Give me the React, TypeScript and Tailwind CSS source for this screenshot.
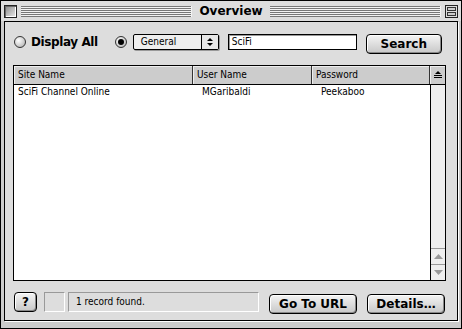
const ui = "font-['DejaVu_Sans_Condensed','DejaVu_Sans',sans-serif]";
const bold = "font-['DejaVu_Sans','Liberation_Sans',sans-serif] font-bold";

function MacButton({ label, w }: { label: string; w: string }) {
  return (
    <button
      className={`${w} h-[20px] rounded-[4px] border border-black bg-gradient-to-b from-[#f4f4f4] to-[#c8c8c8] shadow-[inset_-1px_-1px_0_#888,inset_1px_1px_0_#fff] text-[12px] leading-none text-black ${bold}`}
    >
      {label}
    </button>
  );
}

function Radio({ on }: { on?: boolean }) {
  return (
    <span className="w-[12px] h-[12px] rounded-full border border-[#333] bg-[radial-gradient(circle_at_35%_35%,#fff,#aaa)] flex items-center justify-center">
      {on && <span className="w-[6px] h-[6px] rounded-full bg-black" />}
    </span>
  );
}

function Stripes() {
  return (
    <div className="flex-1 h-[11px] bg-[repeating-linear-gradient(to_bottom,#777_0px,#777_1px,#f2f2f2_1px,#f2f2f2_2px)] border-r border-[#f2f2f2]" />
  );
}

export default function App() {
  return (
    <div className="w-[462px] h-[329px] bg-[#cccccc] border border-black flex flex-col text-black select-none">
      {/* Title bar */}
      <div className="h-[20px] flex items-center gap-[4px] pl-[3px] pr-[3px] bg-[#dddddd]">
        <div className="w-[13px] h-[13px] border border-[#222] bg-gradient-to-br from-[#888] to-[#eee] shadow-[inset_1px_1px_0_#666,inset_-1px_-1px_0_#fff]" />
        <Stripes />
        <span className={`px-[3px] text-[12px] leading-none ${bold}`}>Overview</span>
        <Stripes />
        <div className="w-[13px] h-[13px] border border-[#222] bg-[#ddd] flex flex-col p-[1px] gap-[1px]">
          <div className="flex-1 border border-[#333] bg-[#ccc]" />
          <div className="flex-1 border border-[#333] bg-[#ccc]" />
        </div>
      </div>

      {/* Content area */}
      <div className="flex-1 ml-[3px] mr-[3px] mb-[7px] border border-black bg-[#dddddd] flex flex-col shadow-[1px_1px_0_#fff]">
        {/* Search row */}
        <div className="mt-[9px] h-[21px] flex items-center pl-[9px]">
          <Radio />
          <span className={`ml-[5px] text-[12px] tracking-[-0.4px] ${bold}`}>Display All</span>
          <span className="ml-[17px]"><Radio on /></span>
          <div className={`ml-[6px] w-[86px] h-[16px] rounded-[2px] border border-black bg-[#eeeeee] flex shadow-[1px_1px_0_#999] ${ui} text-[10px]`}>
            <span className="flex-1 pl-[7px] leading-[14px]">General</span>
            <span className="w-[17px] border-l border-black flex flex-col items-center justify-center gap-[2px] bg-[#e8e8e8]">
              <svg width="6" height="3" viewBox="0 0 6 3"><path d="M0 3L3 0L6 3Z" fill="#000" /></svg>
              <svg width="6" height="3" viewBox="0 0 6 3"><path d="M0 0L3 3L6 0Z" fill="#000" /></svg>
            </span>
          </div>
          <div className={`ml-[9px] w-[129px] h-[16px] border border-black bg-white shadow-[inset_1px_1px_0_#999] pl-[3px] text-[10px] leading-[14px] ${ui}`}>
            SciFi
          </div>
          <div className="ml-[9px]">
            <MacButton label="Search" w="w-[76px]" />
          </div>
        </div>

        {/* List */}
        <div className="mt-[13px] ml-[8px] w-[433px] h-[216px] border border-black bg-white flex flex-col">
          <div className={`h-[19px] flex bg-[#cccccc] border-b border-black text-[10px] ${ui}`}>
            <div className="w-[179px] pl-[4px] leading-[18px] border-r border-[#333] shadow-[inset_1px_1px_0_#eee]">Site Name</div>
            <div className="w-[119px] pl-[4px] leading-[18px] border-r border-[#333] shadow-[inset_1px_1px_0_#eee]">User Name</div>
            <div className="flex-1 pl-[4px] leading-[18px] border-r border-[#333] shadow-[inset_1px_1px_0_#eee]">Password</div>
            <div className="w-[15px] flex items-center justify-center shadow-[inset_1px_1px_0_#eee]">
              <svg width="8" height="8" viewBox="0 0 8 8">
                <path d="M4 0L7 3H1Z" fill="#000" />
                <rect x="0" y="4" width="8" height="1" fill="#000" />
                <rect x="0" y="6" width="8" height="1" fill="#000" />
              </svg>
            </div>
          </div>
          <div className="flex-1 flex">
            <div className={`flex-1 text-[10px] ${ui}`}>
              <div className="h-[14px] flex leading-[14px]">
                <span className="w-[180px] pl-[4px]">SciFi Channel Online</span>
                <span className="w-[119px] pl-[8px]">MGaribaldi</span>
                <span className="pl-[8px]">Peekaboo</span>
              </div>
            </div>
            <div className="w-[15px] border-l border-black bg-[#eeeeee] flex flex-col justify-end">
              <div className="h-[16px] border-t border-[#999] flex items-center justify-center">
                <svg width="9" height="5" viewBox="0 0 9 5"><path d="M0 5L4.5 0L9 5Z" fill="#999" /></svg>
              </div>
              <div className="h-[16px] border-t border-[#999] flex items-center justify-center">
                <svg width="9" height="5" viewBox="0 0 9 5"><path d="M0 0L4.5 5L9 0Z" fill="#999" /></svg>
              </div>
            </div>
          </div>
        </div>

        {/* Bottom row */}
        <div className="mt-[10px] h-[21px] flex items-center pl-[9px]">
          <MacButton label="?" w="w-[23px]" />
          <div className="ml-[7px] w-[21px] h-[20px] border border-t-[#999] border-l-[#999] border-b-white border-r-white" />
          <div className={`ml-[3px] w-[191px] h-[20px] border border-t-[#999] border-l-[#999] border-b-white border-r-white pl-[7px] text-[10px] leading-[18px] ${ui}`}>
            1 record found.
          </div>
          <div className="ml-[10px]">
            <MacButton label="Go To URL" w="w-[88px]" />
          </div>
          <div className="ml-[10px]">
            <MacButton label="Details…" w="w-[78px]" />
          </div>
        </div>
      </div>
    </div>
  );
}
